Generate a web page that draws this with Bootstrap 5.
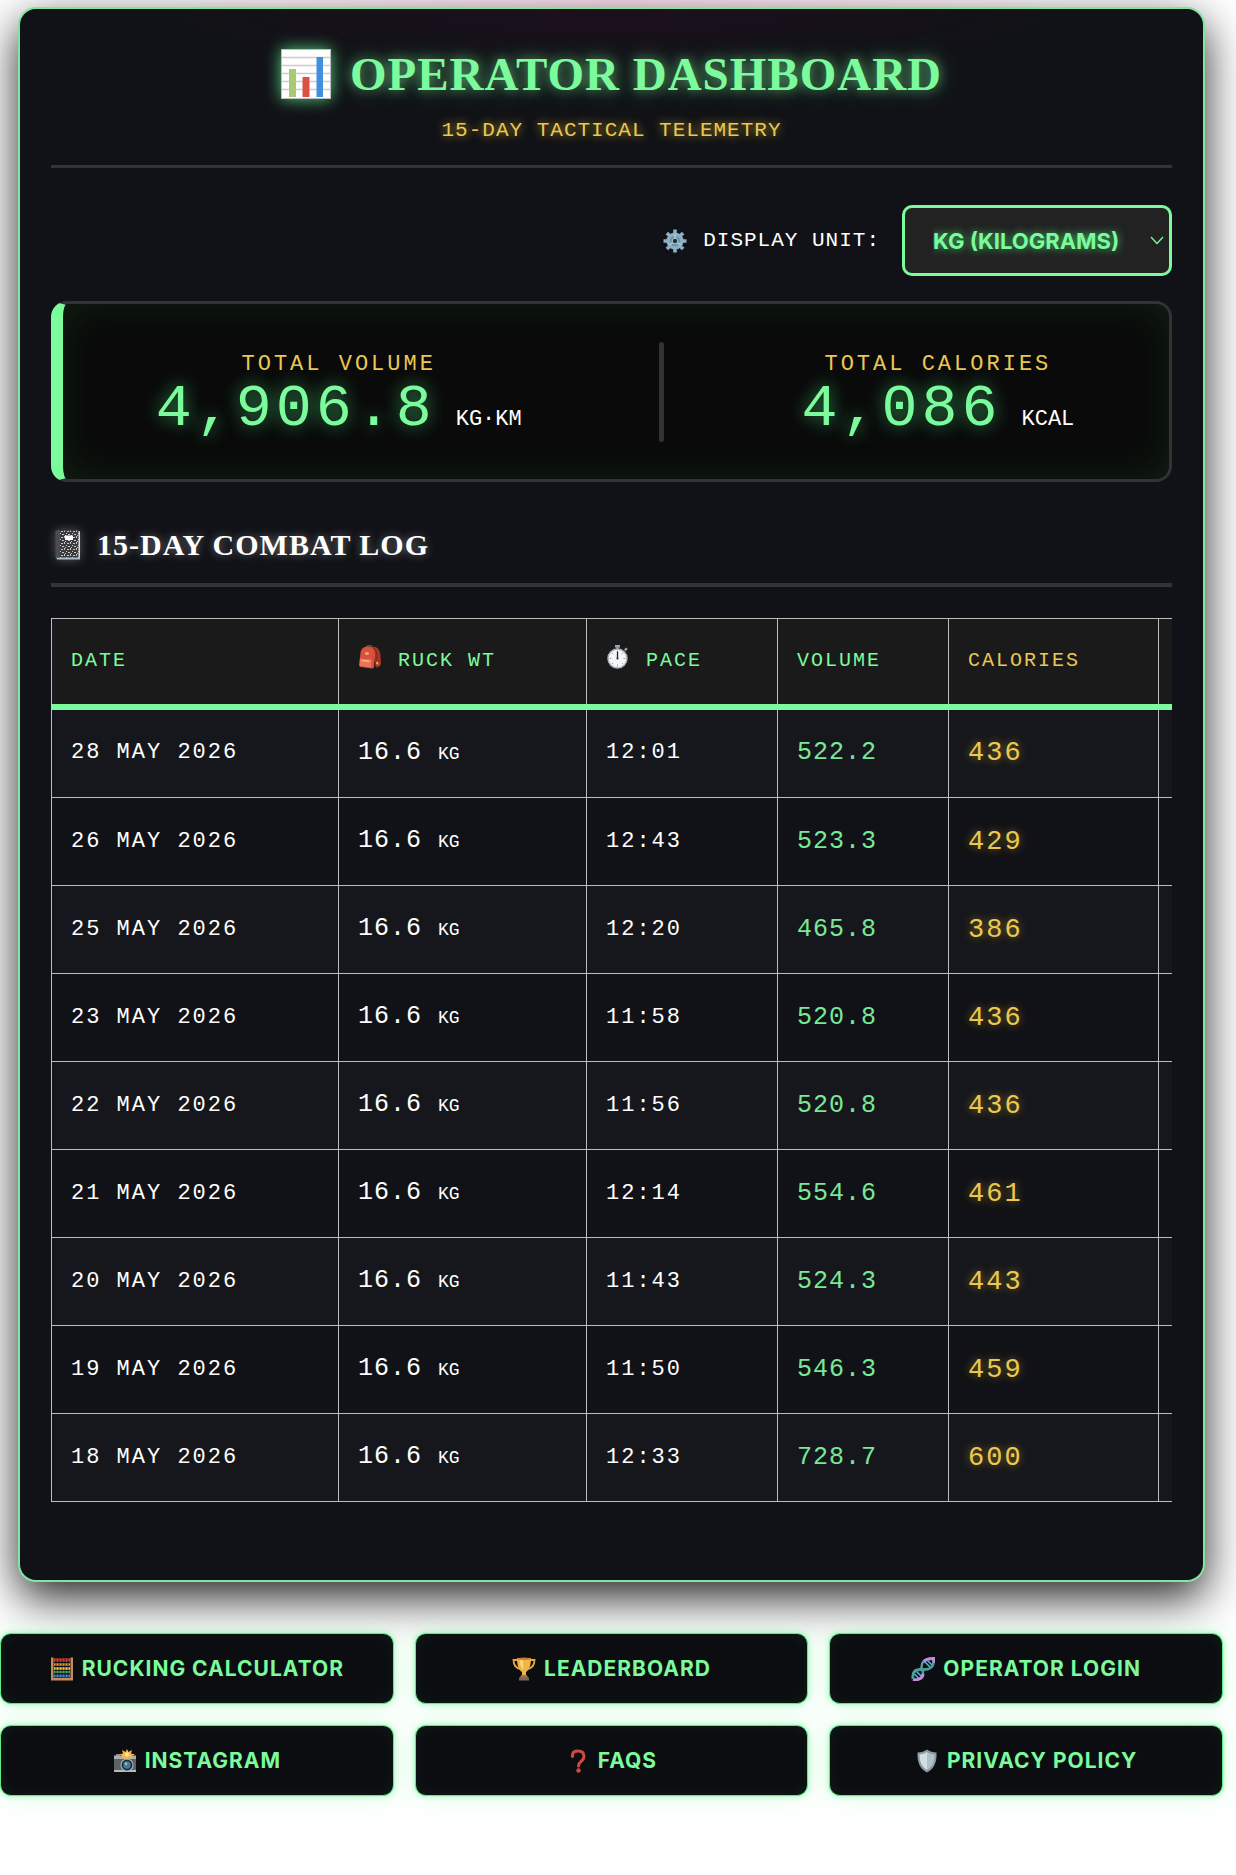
<!DOCTYPE html>
<html lang="en">
<head>
<meta charset="utf-8">
<meta name="viewport" content="width=device-width, initial-scale=1">
<title>Operator Dashboard</title>
<link rel="stylesheet" href="https://cdn.jsdelivr.net/npm/bootstrap@5.3.0/dist/css/bootstrap.min.css">
<style>
  :root { --neon: #7bfb9c; --gold: #eac852; --line: #333; --panel: #111217; --mono: "Liberation Mono", "Courier New", monospace; }
  body { background: radial-gradient(ellipse 460px 70px at 50% 0, rgba(255, 0, 128, .11), transparent) no-repeat #fff; font-family: Inter, sans-serif; color: #fff; overflow-x: hidden; padding-right: 13px; }
  .panel-shell { margin: 7px 18px 0; padding: 32px 31px 78px; border: 2px solid #7fe79b; border-radius: 18px;
    background: radial-gradient(ellipse 460px 60px at 50% 0, rgba(90, 0, 60, .16), transparent) no-repeat var(--panel);
    box-shadow: 0 16px 45px rgba(0, 0, 0, .85); }
  .panel-head { border-bottom: 3px solid var(--line); padding-bottom: 16px; }
  .title-main { font: bold 47px/66px "Liberation Serif", serif; letter-spacing: 1px; color: var(--neon); text-shadow: 0 0 12px rgba(123, 251, 156, .55), 0 0 24px rgba(123, 251, 156, .35); gap: 19px; }
  .title-main svg { width: 50px; height: 50px; filter: drop-shadow(0 0 8px rgba(100, 255, 150, .8)); }
  .title-sub { font: 21px/36px var(--mono); letter-spacing: 1px; color: var(--gold); text-shadow: 0 0 10px rgba(234, 190, 40, .8); padding-top: 6px; }
  .unit-row { gap: 22px; margin: 37px 0 25px; }
  .unit-label { font: 21px/32px var(--mono); letter-spacing: 1px; gap: 16px; }
  .unit-label svg { width: 24px; height: 24px; }
  .unit-pick { position: relative; width: 270px; }
  .unit-pick select { width: 100%; height: 71px; padding: 0 40px 0 28px; background: #222; border: 3px solid var(--neon); border-radius: 10px; color: var(--neon); font: bold 22px/32px Inter, sans-serif; text-shadow: 0 0 8px rgba(80, 255, 130, .75); appearance: none; }
  .unit-pick svg { position: absolute; right: 8px; top: 31px; width: 14px; height: 9px; pointer-events: none; }
  .totals { min-height: 181px; padding: 6px 26px 0 24px; background: #0a0a0a; border: 3px solid var(--line); border-left: 12px solid var(--neon); border-radius: 16px; box-shadow: inset 0 0 40px rgba(60, 200, 90, .12); }
  .total-name { font: 22px/28px var(--mono); letter-spacing: 3px; color: var(--gold); }
  .total-num { font: 60px/60px var(--mono); letter-spacing: 4px; color: var(--neon); text-shadow: 0 0 18px rgba(80, 255, 140, .6); }
  .total-unit { font: 22px/28px var(--mono); }
  .total-line { gap: 20px; }
  .total-split { width: 5px; height: 100px; margin-bottom: 6px; border-radius: 3px; background: var(--line); }
  .log-title { font: bold 30px/40px "Liberation Serif", serif; letter-spacing: 1px; gap: 16px; margin: 41px 0 31px; padding: 2px 0 18px 4px; border-bottom: 4px solid var(--line); text-shadow: 0 0 10px rgba(255, 255, 255, .4); }
  .log-title svg { width: 26px; height: 30px; filter: drop-shadow(0 0 5px rgba(255, 255, 255, .3)); }
  .log-wrap { overflow-x: auto; scrollbar-width: none; }
  .log-table { --bs-table-bg: transparent; --bs-table-color: #fff; width: 1240px; margin: 0; table-layout: fixed; border-collapse: collapse; font: 22px/32px var(--mono); letter-spacing: 2px; color: #fff; }
  .log-table th, .log-table td { height: 88px; padding: 0 19px; border: 1px solid #bdbdc1; vertical-align: middle; color: #fff; }
  .log-table tbody tr:nth-child(odd) td { background: #16171c; }
  .log-table tbody tr:first-child td { height: 91px; }
  .log-table thead th, .log-table thead td { background: #1a1a1a; border-bottom: 6px solid var(--neon); font-size: 20px; font-weight: normal; color: var(--neon); }
  .log-table thead svg { width: 24px; height: 24px; margin-right: 16px; vertical-align: -3px; }
  .log-table .c-wt, .log-table .c-vol { font-size: 25px; letter-spacing: 1px; }
  .log-table .c-wt span { font-size: 18px; letter-spacing: 0; }
  .log-table .c-vol { color: #78e896; }
  .log-table .c-cal { font-size: 27px; color: var(--gold); text-shadow: 0 0 9px rgba(234, 190, 40, .55); }
  .log-table thead .c-goldhead { color: var(--gold); }
  .link-grid { display: grid; grid-template-columns: repeat(3, 1fr); gap: 21px; margin: 51px 0 76px; }
  .link-tile { height: 71px; border: 1px solid #5fe98a; border-radius: 11px; background: #0c0d11; color: var(--neon); font-size: 21px; line-height: 32px; font-weight: 700; letter-spacing: 1px; gap: 8px; text-decoration: none; box-shadow: 0 0 5px rgba(90, 255, 140, .7), 0 0 26px rgba(123, 251, 156, .25), inset 0 0 15px rgba(60, 200, 90, .08); }
  .link-tile:hover { color: #fff; }
  .link-tile svg { width: 24px; height: 24px; }
</style>
<script src="https://cdn.jsdelivr.net/npm/bootstrap@5.3.0/dist/js/bootstrap.bundle.min.js"></script>
</head>
<body>
<main class="panel-shell">
  <header class="panel-head text-center">
    <h1 class="title-main d-flex justify-content-center align-items-center m-0">
      <svg viewBox="0 0 50 50" aria-hidden="true"><rect x=".5" y=".5" width="49" height="49" fill="#fff" stroke="#b9bec2"/><path d="M1 8.500h48M1 16.500h48M1 24.500h48M1 32.500h48M1 40.500h48" stroke="#c9ccd0" stroke-width="1.300"/><path d="M8 20h7v28H8z" fill="#a8cb72"/><path d="M21.500 28h7v20h-7z" fill="#dc5240"/><path d="M35.500 8h6.500v40h-6.500z" fill="#418fde"/></svg>
      <span>OPERATOR DASHBOARD</span>
    </h1>
    <div class="title-sub">15-DAY TACTICAL TELEMETRY</div>
  </header>

  <div class="unit-row d-flex justify-content-end align-items-center">
    <label class="unit-label d-flex align-items-center" for="unit">
      <svg viewBox="0 0 24 24" aria-hidden="true"><g stroke="#8db0c4" stroke-width="3.600"><path d="M12 .5v23M.5 12h23M3.900 3.900l16.200 16.200M20.100 3.900L3.900 20.100"/></g><circle cx="12" cy="12" r="8.600" fill="#8db0c4"/><circle cx="12" cy="12" r="5.300" fill="#6d91a8"/><path d="M12 12V5M12 12l-6 4M12 12l6 4" stroke="#a6c4d4" stroke-width="2"/><circle cx="12" cy="12" r="2.800" fill="#26323b" stroke="#b0cad8"/></svg>
      <span>DISPLAY UNIT:</span>
    </label>
    <div class="unit-pick">
      <select id="unit"><option>KG (KILOGRAMS)</option></select>
      <svg viewBox="0 0 14 9" fill="none" stroke="#7bfb9c" stroke-width="1.300" aria-hidden="true"><path d="M1 1l6 6.500L13 1"/></svg>
    </div>
  </div>

  <section class="totals d-flex justify-content-around align-items-center">
    <div class="text-center">
      <div class="total-name">TOTAL VOLUME</div>
      <div class="total-line d-flex align-items-baseline"><span class="total-num">4,906.8</span><span class="total-unit">KG·KM</span></div>
    </div>
    <div class="total-split"></div>
    <div class="text-center">
      <div class="total-name">TOTAL CALORIES</div>
      <div class="total-line d-flex align-items-baseline"><span class="total-num">4,086</span><span class="total-unit">KCAL</span></div>
    </div>
  </section>

  <h2 class="log-title d-flex align-items-center">
    <svg viewBox="0 0 26 30" aria-hidden="true"><defs><pattern id="speck" width="6" height="6" patternUnits="userSpaceOnUse"><rect width="6" height="6" fill="#3b3b3d"/><path d="M0 1h2v1H0zM3 0h1v2H3zM5 3h1v1H5zM1 4h2v1H1zM4 5h1v1H4z" fill="#c9c9c9"/></pattern></defs><path d="M2 1h22a1 1 0 011 1v27H2z" fill="#d5dbe0"/><path d="M1 27h24v2.500H2z" fill="#a9bfcb"/><path d="M1 .5h22.500v27H1z" fill="url(#speck)"/><path d="M.5.5h4.500v27H.5z" fill="#4a4c50"/><path d="M10 5.500h8v4.500h-8z" fill="#fff"/></svg>
    <span>15-DAY COMBAT LOG</span>
  </h2>

  <div class="log-wrap">
    <table class="table log-table">
      <colgroup><col style="width:287px"><col style="width:248px"><col style="width:191px"><col style="width:171px"><col style="width:210px"><col></colgroup>
      <thead><tr>
        <th scope="col">DATE</th>
        <th scope="col"><svg viewBox="0 0 24 24" aria-hidden="true"><path d="M8.500 3.500C8.500-.5 14-.5 14 3" fill="none" stroke="#555" stroke-width="1.500"/><path d="M14 2c5-1.500 8 3 8.500 8l.5 9c0 2-2 3-5 3.500z" fill="#a93325"/><path d="M2.500 8c.5-4.500 3.500-6.500 7.500-6.500 5 0 7 3 7 8L16 22c-.3 1.300-1 1.500-2 1.500L3 22c-1.500-.3-2-1-2-2.500z" fill="#d9503b"/><path d="M2 13.500l11.500 1-.5 8L2 21z" fill="#ea7359"/><path d="M3.500 15.500l8 .8" stroke="#f8b47e" stroke-width="1.500"/><ellipse cx="9" cy="8.500" rx="2" ry="1.500" fill="#f4a47f"/><path d="M15.500 3c3 2 3.500 6 3 10l-1 8" fill="none" stroke="#8e291e" stroke-width="1.300"/><path d="M18.500 17l1.500 2.500" stroke="#f1c04c" stroke-width="1.500"/></svg>RUCK WT</th>
        <th scope="col"><svg viewBox="0 0 24 24" aria-hidden="true"><path d="M9 0h5v2.500h-1.500V4h-2V2.500H9zM18 4.500l2.200-2 1.500 1.500-2 2.200z" fill="#9ba3a9"/><circle cx="11.500" cy="13.500" r="9.500" fill="#f4f5f6" stroke="#aab1b6" stroke-width="1.500"/><path d="M11.500 5.500v2M11.500 19.500v2M3.500 13.500h2M17.500 13.500h2M5.900 7.900l1.200 1.200M15.900 17.900l1.200 1.200M5.900 19.100l1.200-1.200M15.900 9.100l1.200-1.200" stroke="#8b9297" stroke-width=".8"/><path d="M11.500 13.500V6.500" stroke="#222" stroke-width="1.300"/><circle cx="11.500" cy="13.500" r="1.100" fill="#333"/></svg>PACE</th>
        <th scope="col">VOLUME</th>
        <th scope="col" class="c-goldhead">CALORIES</th>
        <td></td>
      </tr></thead>
      <tbody>
        <tr><td>28 MAY 2026</td><td class="c-wt">16.6 <span>KG</span></td><td>12:01</td><td class="c-vol">522.2</td><td class="c-cal">436</td><td></td></tr>
        <tr><td>26 MAY 2026</td><td class="c-wt">16.6 <span>KG</span></td><td>12:43</td><td class="c-vol">523.3</td><td class="c-cal">429</td><td></td></tr>
        <tr><td>25 MAY 2026</td><td class="c-wt">16.6 <span>KG</span></td><td>12:20</td><td class="c-vol">465.8</td><td class="c-cal">386</td><td></td></tr>
        <tr><td>23 MAY 2026</td><td class="c-wt">16.6 <span>KG</span></td><td>11:58</td><td class="c-vol">520.8</td><td class="c-cal">436</td><td></td></tr>
        <tr><td>22 MAY 2026</td><td class="c-wt">16.6 <span>KG</span></td><td>11:56</td><td class="c-vol">520.8</td><td class="c-cal">436</td><td></td></tr>
        <tr><td>21 MAY 2026</td><td class="c-wt">16.6 <span>KG</span></td><td>12:14</td><td class="c-vol">554.6</td><td class="c-cal">461</td><td></td></tr>
        <tr><td>20 MAY 2026</td><td class="c-wt">16.6 <span>KG</span></td><td>11:43</td><td class="c-vol">524.3</td><td class="c-cal">443</td><td></td></tr>
        <tr><td>19 MAY 2026</td><td class="c-wt">16.6 <span>KG</span></td><td>11:50</td><td class="c-vol">546.3</td><td class="c-cal">459</td><td></td></tr>
        <tr><td>18 MAY 2026</td><td class="c-wt">16.6 <span>KG</span></td><td>12:33</td><td class="c-vol">728.7</td><td class="c-cal">600</td><td></td></tr>
      </tbody>
    </table>
  </div>
</main>

<nav class="link-grid">
  <a class="link-tile d-flex justify-content-center align-items-center" href="#"><svg viewBox="0 0 24 24" aria-hidden="true"><path d="M4 3h16" stroke="#d6402f" stroke-width="3.500"/><path d="M4 7.500h16" stroke="#e8923a" stroke-width="2.600"/><path d="M4 11.500h16" stroke="#f2d34a" stroke-width="2.600"/><path d="M4 15h16" stroke="#58a84c" stroke-width="2.400"/><path d="M4 19h16" stroke="#3f86dc" stroke-width="3"/><path d="M6 1v20M9 1v20M12 1v20M15 1v20M18 1v20" stroke="#0c0d11" stroke-width=".7"/><path d="M1 .5h2.500v23H1zM20.500.5H23v23h-2.500zM1 21h22v2.500H1z" fill="#c58a5a"/></svg>RUCKING CALCULATOR</a>
  <a class="link-tile d-flex justify-content-center align-items-center" href="#"><svg viewBox="0 0 24 24" aria-hidden="true"><path d="M6 3H1.500c0 5 2 8 7 9M18 3h4.500c0 5-2 8-7 9" fill="none" stroke="#e9a93c" stroke-width="1.800"/><path d="M5 1h14c0 8-2 12-5 14v3h-4v-3C7 13 5 9 5 1z" fill="#f2b443"/><path d="M8 2h3c0 5 0 8 .5 11C9 11 8 7 8 2z" fill="#fbd983"/><ellipse cx="12" cy="1.800" rx="7" ry="1.300" fill="#c9812b"/><path d="M9 18h6l1 3H8z" fill="#a4723f"/><path d="M7 20.500h10v3H7z" fill="#7d6455"/></svg>LEADERBOARD</a>
  <a class="link-tile d-flex justify-content-center align-items-center" href="#"><svg viewBox="0 0 24 24" fill="none" aria-hidden="true"><path d="M13 4l7 7M16 3l6 6M4 13l7 7M2.500 16l6 6M9 11l4 4" stroke="#59b8d3" stroke-width="1.500"/><path d="M2 22.500c5 1 10-1 10-6" stroke="#c58ade" stroke-width="3"/><path d="M2 22C1 15 4 12.500 9 12.500c4 0 9 1 12-3 1.500-2 2-4 1.500-8" stroke="#4d9d9d" stroke-width="2.800"/><path d="M12 17c0-3 0-4-1.500-7C11 4 14 1.500 22.500 1.500" stroke="#4d9d9d" stroke-width="2.400"/><path d="M13 4.500c2-2.500 5-3 10-3v4" stroke="#c58ade" stroke-width="3"/></svg>OPERATOR LOGIN</a>
  <a class="link-tile d-flex justify-content-center align-items-center" href="#"><svg viewBox="0 0 24 24" aria-hidden="true"><path d="M3 5h4v2H3z" fill="#888"/><path d="M1 7h22v16H1z" fill="#5d6266"/><path d="M1 6.500h22V10H1z" fill="#a7adb1"/><path d="M1 21h22v2H1z" fill="#b5babd"/><circle cx="14" cy="16" r="6" fill="#202a31" stroke="#a4abb0" stroke-width="1.200"/><circle cx="14" cy="16" r="3.700" fill="#3d7f99"/><circle cx="13" cy="14.800" r="1.300" fill="#8ec8d6"/><path d="M14 0l1.500 3L19 1l-1 3.500 4 1-3.500 1.500L20 10l-4-1.500L14 11l-1.500-2.500L8 10l1.500-3L6 5.500l4-1L9 1l3.500 2z" fill="#f8b74b"/><circle cx="14" cy="5.600" r="2" fill="#ffeaa0"/></svg>INSTAGRAM</a>
  <a class="link-tile d-flex justify-content-center align-items-center" href="#"><svg viewBox="0 0 24 24" aria-hidden="true"><path d="M6.500 7.500C6 3 9 2 12 2c4 0 6 2 6 5.500 0 5-5.500 4.500-5.500 9.500" fill="none" stroke="#cf4a40" stroke-width="3" stroke-linecap="round"/><circle cx="12.500" cy="21.500" r="2.200" fill="#cf4a40"/></svg>FAQS</a>
  <a class="link-tile d-flex justify-content-center align-items-center" href="#"><svg viewBox="0 0 24 24" aria-hidden="true"><path d="M12 .5c2.500 2 6 3 9.500 3C22 13 19 20 12 23.500 5 20 2 13 2.500 3.500 6 3.500 9.500 2.500 12 .5z" fill="#8b9ba5"/><path d="M12 3c2 1.500 5 2.500 7.500 2.500C19.500 13 17 18 12 21z" fill="#b3c0c7"/><path d="M12 3C10 4.500 7 5.500 4.500 5.500 4.500 13 7 18 12 21z" fill="#d3dde2"/></svg>PRIVACY POLICY</a>
</nav>
</body>
</html>
